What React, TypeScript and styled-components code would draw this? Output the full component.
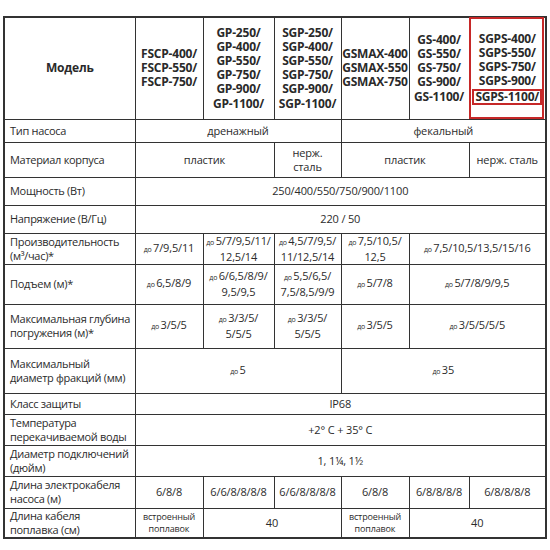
import React from 'react';
import styled, { createGlobalStyle } from 'styled-components';

const GlobalStyle = createGlobalStyle`
  html, body {
    margin: 0;
    padding: 0;
    background: #ffffff;
  }
  body {
    font-family: 'Open Sans', 'Noto Sans', sans-serif;
    color: #2b2b2b;
  }
`;

type Cell = { t: string[]; span?: number; pre?: boolean; small?: boolean };
type Row = { label: string[]; h: number; cells: Cell[] };

const MODELS = [
  ['FSCP-400/', 'FSCP-550/', 'FSCP-750/'],
  ['GP-250/', 'GP-400/', 'GP-550/', 'GP-750/', 'GP-900/', 'GP-1100/'],
  ['SGP-250/', 'SGP-400/', 'SGP-550/', 'SGP-750/', 'SGP-900/', 'SGP-1100/'],
  ['GSMAX-400', 'GSMAX-550', 'GSMAX-750'],
  ['GS-400/', 'GS-550/', 'GS-750/', 'GS-900/', 'GS-1100/'],
];

const SGPS = ['SGPS-400/', 'SGPS-550/', 'SGPS-750/', 'SGPS-900/'];

const COLS = [131, 68, 71, 67, 68, 60, 77];

const ROWS: Row[] = [
  {
    label: ['Тип насоса'],
    h: 23,
    cells: [
      { t: ['дренажный'], span: 3 },
      { t: ['фекальный'], span: 3 },
    ],
  },
  {
    label: ['Материал корпуса'],
    h: 35,
    cells: [
      { t: ['пластик'], span: 2 },
      { t: ['нерж.', 'сталь'] },
      { t: ['пластик'], span: 2 },
      { t: ['нерж. сталь'] },
    ],
  },
  {
    label: ['Мощность (Вт)'],
    h: 28,
    cells: [{ t: ['250/400/550/750/900/1100'], span: 6 }],
  },
  {
    label: ['Напряжение (В/Гц)'],
    h: 28,
    cells: [{ t: ['220 / 50'], span: 6 }],
  },
  {
    label: ['Производительность', '(м³/час)*'],
    h: 30,
    cells: [
      { t: ['7/9,5/11'], pre: true },
      { t: ['5/7/9,5/11/', '12,5/14'], pre: true },
      { t: ['4,5/7/9,5/', '11/12,5/14'], pre: true },
      { t: ['7,5/10,5/', '12,5'], pre: true },
      { t: ['7,5/10,5/13,5/15/16'], pre: true, span: 2 },
    ],
  },
  {
    label: ['Подъем (м)*'],
    h: 40,
    cells: [
      { t: ['6,5/8/9'], pre: true },
      { t: ['6/6,5/8/9/', '9,5/9,5'], pre: true },
      { t: ['5,5/6,5/', '7,5/8,5/9/9'], pre: true },
      { t: ['5/7/8'], pre: true },
      { t: ['5/7/8/9/9,5'], pre: true, span: 2 },
    ],
  },
  {
    label: ['Максимальная глубина', 'погружения (м)*'],
    h: 44,
    cells: [
      { t: ['3/5/5'], pre: true },
      { t: ['3/3/5/', '5/5/5'], pre: true },
      { t: ['3/3/5/', '5/5/5'], pre: true },
      { t: ['3/5/5'], pre: true },
      { t: ['3/5/5/5/5'], pre: true, span: 2 },
    ],
  },
  {
    label: ['Максимальный', 'диаметр фракций (мм)'],
    h: 45,
    cells: [
      { t: ['5'], pre: true, span: 3 },
      { t: ['35'], pre: true, span: 3 },
    ],
  },
  {
    label: ['Класс защиты'],
    h: 21,
    cells: [{ t: ['IP68'], span: 6 }],
  },
  {
    label: ['Температура', 'перекачиваемой воды'],
    h: 31,
    cells: [{ t: ['+2° С + 35° С'], span: 6 }],
  },
  {
    label: ['Диаметр подключений', '(дюйм)'],
    h: 31,
    cells: [{ t: ['1,  1¼,  1½'], span: 6 }],
  },
  {
    label: ['Длина электрокабеля', 'насоса (м)'],
    h: 32,
    cells: [
      { t: ['6/8/8'] },
      { t: ['6/6/8/8/8/8'] },
      { t: ['6/6/8/8/8/8'] },
      { t: ['6/8/8'] },
      { t: ['6/8/8/8/8'] },
      { t: ['6/8/8/8/8'] },
    ],
  },
  {
    label: ['Длина кабеля', 'поплавка (см)'],
    h: 30,
    cells: [
      { t: ['встроенный', 'поплавок'], small: true },
      { t: ['40'], span: 2 },
      { t: ['встроенный', 'поплавок'], small: true },
      { t: ['40'], span: 2 },
    ],
  },
];

const Page = styled.div`
  width: 550px;
  height: 550px;
  padding: 16px 0 0 3px;
  box-sizing: border-box;
  overflow: hidden;
`;

const Table = styled.table`
  width: 542px;
  table-layout: fixed;
  border-collapse: collapse;
  border: 2px solid #333;
`;

const HeadCell = styled.th`
  box-sizing: border-box;
  height: 102px;
  padding: 0;
  border: 1.5px solid #333;
  font-weight: 700;
  font-size: 12px;
  line-height: 14.2px;
  letter-spacing: -0.2px;
  color: #2a2a2a;
  text-align: center;
  vertical-align: middle;
  white-space: nowrap;
`;

const RedHead = styled(HeadCell)`
  position: relative;
`;

const RedFrame = styled.div`
  position: absolute;
  inset: -1px 1px 0 -1px;
  border: 2px solid #c62828;
  pointer-events: none;
`;

const RedMark = styled.span`
  display: inline-block;
  padding: 0 1px;
  line-height: 12px;
  border: 2px solid #c62828;
`;

const LabelCell = styled.td<{ $h: number }>`
  box-sizing: border-box;
  height: ${(p) => p.$h}px;
  padding: 0 0 0 5px;
  border: 1.5px solid #333;
  font-size: 11px;
  line-height: 14px;
  letter-spacing: -0.3px;
  text-align: left;
  vertical-align: middle;
  white-space: nowrap;
`;

const ValueCell = styled.td<{ $small?: boolean }>`
  box-sizing: border-box;
  padding: 0;
  border: 1.5px solid #333;
  font-size: ${(p) => (p.$small ? 9 : 11)}px;
  line-height: ${(p) => (p.$small ? 12 : 14)}px;
  letter-spacing: -0.15px;
  text-align: center;
  vertical-align: middle;
  white-space: nowrap;
`;

const Pre = styled.span`
  font-size: 7px;
  letter-spacing: -0.2px;
  margin-right: 1.5px;
`;

const Lines = ({ lines, pre }: { lines: string[]; pre?: boolean }) => (
  <>
    {lines.map((line, i) => (
      <React.Fragment key={i}>
        {i > 0 && <br />}
        {pre && i === 0 && <Pre>до</Pre>}
        {line}
      </React.Fragment>
    ))}
  </>
);

export default function App() {
  return (
    <Page>
      <GlobalStyle />
      <Table>
        <colgroup>
          {COLS.map((w, i) => (
            <col key={i} style={{ width: w }} />
          ))}
        </colgroup>
        <thead>
          <tr>
            <HeadCell>Модель</HeadCell>
            {MODELS.map((m, i) => (
              <HeadCell key={i}>
                <Lines lines={m} />
              </HeadCell>
            ))}
            <RedHead>
              <RedFrame />
              <Lines lines={SGPS} />
              <br />
              <RedMark>SGPS-1100/</RedMark>
            </RedHead>
          </tr>
        </thead>
        <tbody>
          {ROWS.map((row, r) => (
            <tr key={r}>
              <LabelCell $h={row.h}>
                <Lines lines={row.label} />
              </LabelCell>
              {row.cells.map((c, i) => (
                <ValueCell key={i} colSpan={c.span} $small={c.small}>
                  <Lines lines={c.t} pre={c.pre} />
                </ValueCell>
              ))}
            </tr>
          ))}
        </tbody>
      </Table>
    </Page>
  );
}
